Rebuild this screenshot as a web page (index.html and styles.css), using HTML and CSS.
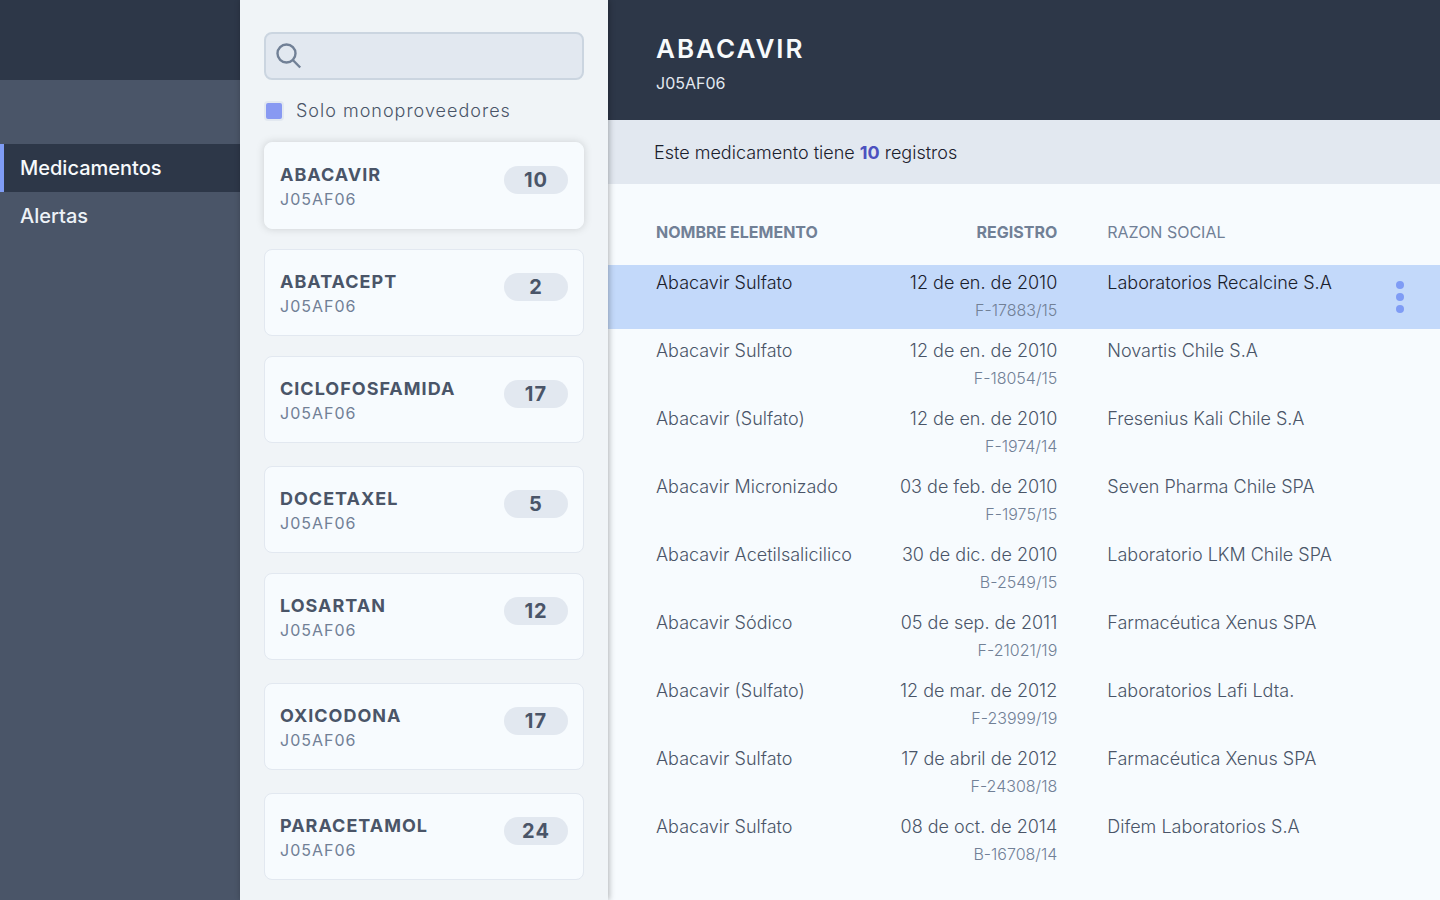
FILE: index.html
```
<!DOCTYPE html>
<html lang="es">
<head>
<meta charset="utf-8">
<meta name="viewport" content="width=device-width, initial-scale=1">
<title>Medicamentos</title>
<link rel="stylesheet" href="styles.css">
</head>
<body>
<div class="app">
  <aside class="sidebar">
    <div class="sidebar-head"></div>
    <nav class="nav">
      <a class="nav-link active" href="#medicamentos">Medicamentos</a>
      <a class="nav-link" href="#alertas">Alertas</a>
    </nav>
  </aside>

  <section class="list-panel">
    <form class="filters">
      <div class="search">
        <svg class="search-icon" viewBox="0 0 26 26" fill="none" stroke="currentColor" stroke-width="2.400" aria-hidden="true">
          <circle cx="10.500" cy="10.500" r="9"/>
          <path d="M16.800 17L24.200 24.500"/>
        </svg>
        <input class="search-input" type="search" aria-label="Buscar">
      </div>
      <label class="check"><input class="check-input" type="checkbox" checked>Solo monoproveedores</label>
    </form>
    <div class="cards">
      <div class="card-group">
        <button class="card selected" type="button"><span class="card-text"><span class="card-name">ABACAVIR</span><span class="card-code">J05AF06</span></span><span class="badge">10</span></button>
        <button class="card" type="button"><span class="card-text"><span class="card-name">ABATACEPT</span><span class="card-code">J05AF06</span></span><span class="badge">2</span></button>
        <button class="card" type="button"><span class="card-text"><span class="card-name">CICLOFOSFAMIDA</span><span class="card-code">J05AF06</span></span><span class="badge">17</span></button>
      </div>
      <div class="card-group">
        <button class="card" type="button"><span class="card-text"><span class="card-name">DOCETAXEL</span><span class="card-code">J05AF06</span></span><span class="badge">5</span></button>
        <button class="card" type="button"><span class="card-text"><span class="card-name">LOSARTAN</span><span class="card-code">J05AF06</span></span><span class="badge">12</span></button>
      </div>
      <div class="card-group">
        <button class="card" type="button"><span class="card-text"><span class="card-name">OXICODONA</span><span class="card-code">J05AF06</span></span><span class="badge">17</span></button>
      </div>
      <div class="card-group">
        <button class="card" type="button"><span class="card-text"><span class="card-name">PARACETAMOL</span><span class="card-code">J05AF06</span></span><span class="badge">24</span></button>
      </div>
    </div>
  </section>

  <main class="detail">
    <header class="detail-head">
      <h1 class="detail-title">ABACAVIR</h1>
      <p class="detail-code">J05AF06</p>
    </header>
    <p class="summary">Este medicamento tiene <strong class="count">10</strong> registros</p>
    <table class="records">
      <colgroup><col class="col-name"><col class="col-record"><col><col class="col-menu"></colgroup>
      <thead>
        <tr><th class="name" scope="col">NOMBRE ELEMENTO</th><th class="record" scope="col">REGISTRO</th><th class="company" scope="col">RAZON SOCIAL</th><td></td></tr>
      </thead>
      <tbody>
        <tr class="current"><td class="name">Abacavir Sulfato</td><td class="record">12 de en. de 2010<span class="number">F-17883/15</span></td><td class="company">Laboratorios Recalcine S.A</td><td class="menu"><button class="menu-button" type="button" aria-label="Opciones"><svg class="dots" viewBox="0 0 8 32" fill="currentColor" aria-hidden="true"><circle cx="4" cy="4" r="4"/><circle cx="4" cy="16" r="4"/><circle cx="4" cy="28" r="4"/></svg></button></td></tr>
        <tr><td class="name">Abacavir Sulfato</td><td class="record">12 de en. de 2010<span class="number">F-18054/15</span></td><td class="company">Novartis Chile S.A</td><td></td></tr>
        <tr><td class="name">Abacavir (Sulfato)</td><td class="record">12 de en. de 2010<span class="number">F-1974/14</span></td><td class="company">Fresenius Kali Chile S.A</td><td></td></tr>
        <tr><td class="name">Abacavir Micronizado</td><td class="record">03 de feb. de 2010<span class="number">F-1975/15</span></td><td class="company">Seven Pharma Chile SPA</td><td></td></tr>
        <tr><td class="name">Abacavir Acetilsalicilico</td><td class="record">30 de dic. de 2010<span class="number">B-2549/15</span></td><td class="company">Laboratorio LKM Chile SPA</td><td></td></tr>
        <tr><td class="name">Abacavir Sódico</td><td class="record">05 de sep. de 2011<span class="number">F-21021/19</span></td><td class="company">Farmacéutica Xenus SPA</td><td></td></tr>
        <tr><td class="name">Abacavir (Sulfato)</td><td class="record">12 de mar. de 2012<span class="number">F-23999/19</span></td><td class="company">Laboratorios Lafi Ldta.</td><td></td></tr>
        <tr><td class="name">Abacavir Sulfato</td><td class="record">17 de abril de 2012<span class="number">F-24308/18</span></td><td class="company">Farmacéutica Xenus SPA</td><td></td></tr>
        <tr><td class="name">Abacavir Sulfato</td><td class="record">08 de oct. de 2014<span class="number">B-16708/14</span></td><td class="company">Difem Laboratorios S.A</td><td></td></tr>
      </tbody>
    </table>
  </main>
</div>
</body>
</html>
```
FILE: styles.css
```
* { box-sizing: border-box; }

body {
  margin: 0;
  font-family: Inter, "Liberation Sans", sans-serif;
  color: #4a5568;
  background: #f7fbfe;
}

button, input { font: inherit; color: inherit; }

.app {
  display: grid;
  grid-template-columns: 240px 368px minmax(0, 1fr);
  min-height: 100vh;
}

/* Navigation */
.sidebar { background: #4a5568; }
.sidebar-head { height: 80px; background: #2d3748; }
.nav { padding-top: 64px; }
.nav-link {
  display: block;
  padding-left: 16px;
  border-left: 4px solid transparent;
  font-size: 20px;
  font-weight: 500;
  line-height: 48px;
  color: #edf2f7;
  text-decoration: none;
}
.nav-link.active { background: #2d3748; border-color: #7f9cf5; color: #f7fafc; }

/* Medicine list */
.list-panel {
  position: relative;
  z-index: 1;
  padding: 32px 24px 20px;
  background: #f0f4f7;
  box-shadow: 1px 0 6px rgba(0, 0, 0, 0.3);
}
.search {
  display: flex;
  align-items: center;
  height: 48px;
  padding-left: 10px;
  border: 2px solid #cbd5e0;
  border-radius: 8px;
  background: #e2e8f0;
}
.search-icon { flex: none; width: 26px; height: 26px; color: #718096; }
.search-input {
  flex: 1;
  min-width: 0;
  height: 100%;
  padding: 0 10px;
  border: 0;
  outline: 0;
  background: transparent;
}
.check {
  display: flex;
  align-items: center;
  gap: 12px;
  margin-top: 18px;
  font-size: 18px;
  font-weight: 300;
  line-height: 25px;
  letter-spacing: 1px;
}
.check-input {
  appearance: none;
  width: 20px;
  height: 20px;
  margin: 0;
  border: 2px solid #e2e8f0;
  border-radius: 4px;
}
.check-input:checked { background: #8899f2; }

.cards { display: grid; gap: 23px; margin-top: 19px; }
.card-group { display: grid; gap: 20px; }
.card {
  display: flex;
  justify-content: space-between;
  align-items: flex-start;
  height: 87px;
  padding: 20px 15px;
  border: 1px solid #e2e8f0;
  border-radius: 8px;
  background: #f7fbfe;
  text-align: left;
}
.card.selected { border-color: #f7fbfe; box-shadow: 0 0 8px rgba(0, 0, 0, 0.15); }
.card-text { display: grid; }
.card-name {
  font-size: 18px;
  font-weight: 700;
  line-height: 24px;
  letter-spacing: 1px;
}
.card-code {
  font-size: 16px;
  line-height: 24px;
  letter-spacing: 1px;
  color: #718096;
}
.badge {
  width: 64px;
  margin-top: 3px;
  border-radius: 14px;
  background: #e2e8f0;
  font-size: 20px;
  font-weight: 700;
  line-height: 28px;
  letter-spacing: 1px;
  text-align: center;
}

/* Detail */
.detail-head {
  height: 120px;
  padding: 32px 48px 0;
  background: #2d3748;
  color: #f7fafc;
}
.detail-title {
  margin: 0;
  font-size: 26px;
  font-weight: 600;
  line-height: 34px;
  letter-spacing: 2px;
}
.detail-code { margin: 5px 0 0; font-size: 16px; line-height: 24px; color: #e2e8f0; }
.summary {
  margin: 0;
  padding: 1px 46px 0;
  background: #e2e8f0;
  font-size: 18px;
  font-weight: 300;
  line-height: 63px;
  color: #1a202c;
}
.count { font-weight: 700; color: #4c51bf; }

.records {
  width: 100%;
  margin-top: 12px;
  table-layout: fixed;
  border-spacing: 0 4px;
}
.col-name { width: 30%; }
.col-record { width: 24%; }
.col-menu { width: 80px; }
.records th {
  height: 61px;
  padding: 2px 0 0;
  font-size: 16px;
  font-weight: 700;
  color: #718096;
}
.records td {
  height: 64px;
  padding: 4px 0 0;
  vertical-align: top;
  font-size: 18px;
  font-weight: 300;
  line-height: 28px;
}
.records thead td { height: 61px; }
.records .name { padding-left: 48px; text-align: left; }
.records .record { text-align: right; }
.records .company { padding-left: 50px; text-align: left; }
.records th.company { font-weight: 400; }
.number { display: block; font-size: 16px; line-height: 26px; color: #718096; }
.current td { background: #c3d9fa; color: #1a202c; }
.records .menu { padding: 0; line-height: 0; text-align: center; vertical-align: middle; }
.menu-button {
  display: inline-flex;
  padding: 0 8px;
  border: 0;
  background: transparent;
  color: #7f9cf5;
}
.dots { width: 8px; height: 32px; }
```
